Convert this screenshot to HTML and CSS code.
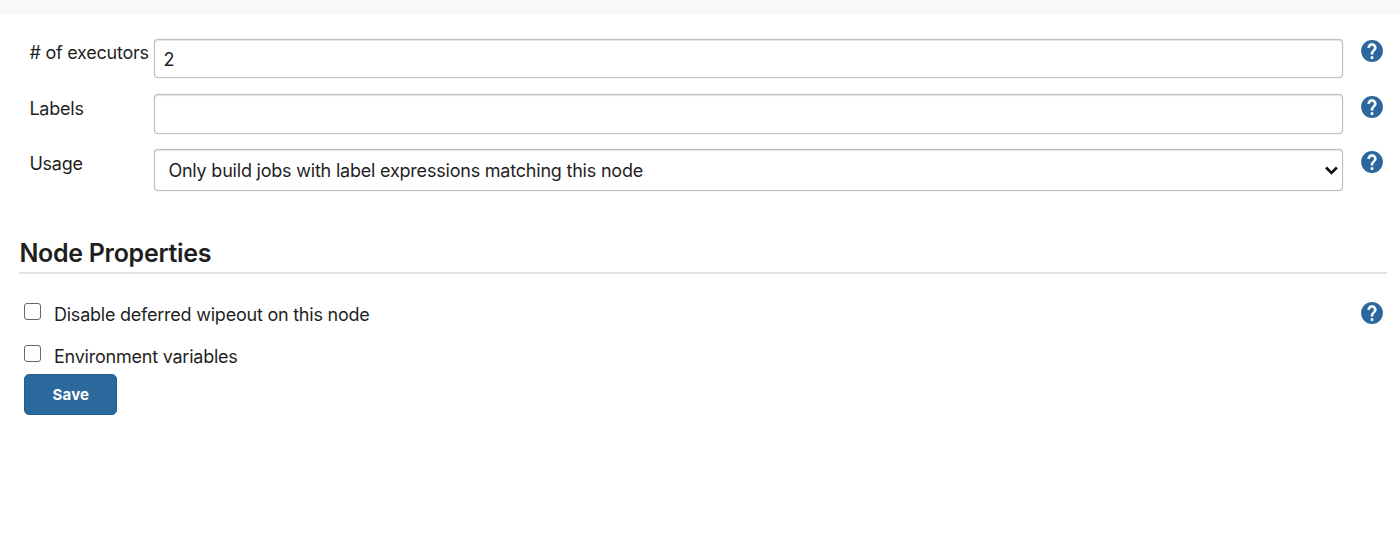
FILE: index.html
```
<!DOCTYPE html>
<html lang="en">
<head>
    <meta charset="UTF-8">
    <meta name="viewport" content="width=device-width, initial-scale=1.0">
    <title>Configure Node</title>
    <link rel="stylesheet" href="styles.css">
</head>
<body>

<svg class="sprite" aria-hidden="true">
    <symbol id="help-icon" viewBox="2 2 20 20">
        <circle cx="12" cy="12" r="9.9"/>
        <path fill="#ffffff" stroke="#ffffff" stroke-width="0.4" d="M13 19h-2v-2h2v2zm2.07-7.75l-.9.92C13.45 12.9 13 13.5 13 15h-2v-.5c0-1.1.45-2.1 1.17-2.83l1.24-1.26c.37-.36.59-.86.59-1.41 0-1.1-.9-2-2-2s-2 .9-2 2H8c0-2.21 1.79-4 4-4s4 1.79 4 4c0 .88-.36 1.68-.93 2.25z"/>
    </symbol>
</svg>

<div class="topbar"></div>

<form class="config">
    <div class="row">
        <label for="executors"># of executors</label>
        <input class="field" type="text" id="executors" value="2">
        <svg class="help"><use href="#help-icon"/></svg>
    </div>

    <div class="row">
        <label for="labels">Labels</label>
        <input class="field" type="text" id="labels">
        <svg class="help"><use href="#help-icon"/></svg>
    </div>

    <div class="row">
        <label for="usage">Usage</label>
        <div class="select">
            <select class="field" id="usage">
                <option>Use this node as much as possible</option>
                <option selected>Only build jobs with label expressions matching this node</option>
            </select>
            <svg class="arrow" viewBox="0 0 12 8"><path d="M1 1.2l5 5 5-5"/></svg>
        </div>
        <svg class="help"><use href="#help-icon"/></svg>
    </div>

    <h2>Node Properties</h2>

    <div class="check">
        <input type="checkbox" id="wipeout">
        <label for="wipeout">Disable deferred wipeout on this node</label>
        <svg class="help"><use href="#help-icon"/></svg>
    </div>

    <div class="check">
        <input type="checkbox" id="env">
        <label for="env">Environment variables</label>
    </div>

    <button type="button">Save</button>
</form>

</body>
</html>
```

FILE: styles.css
```
body {
    margin: 0;
    background-color: #ffffff;
    color: #1f1f1f;
    font-family: Inter, "Liberation Sans", sans-serif;
    font-size: 18px;
    line-height: 22px;
    letter-spacing: -0.23px;
}

.sprite {
    display: none;
}

.topbar {
    height: 15px;
    background-color: #f8f8f8;
}

.config {
    padding: 24px 13px 0 19.4px;
}

.row {
    display: grid;
    grid-template-columns: 125px 1189px 22px;
    height: 39.2px;
    margin: 0 0 16px 10px;
}

.row label {
    padding-top: 3.4px;
    white-space: nowrap;
}

.row .help {
    margin: 1.4px 0 0 17.2px;
}

.field {
    box-sizing: border-box;
    display: block;
    width: 100%;
    height: 39.4px;
    padding: 2px 8px 0;
    border: 1px solid #bebebe;
    border-radius: 4px;
    background-color: #ffffff;
    color: #1f1f1f;
    font: inherit;
    letter-spacing: inherit;
    box-shadow: 0 0 1px rgba(0, 0, 0, 0.3), inset 0 1px 1px rgba(0, 0, 0, 0.1);
}

.select {
    position: relative;
}

select.field {
    height: 42px;
    padding: 2px 13px 0;
    letter-spacing: -0.21px;
    appearance: none;
}

.arrow {
    position: absolute;
    top: 17px;
    right: 5px;
    width: 13px;
    height: 9px;
    fill: none;
    stroke: #111111;
    stroke-width: 2.4;
}

.help {
    width: 22px;
    height: 22px;
    fill: #29679d;
}

h2 {
    margin: 49.4px 0 28px;
    padding-bottom: 4px;
    border-bottom: 2px solid #e2e2e2;
    font-size: 25px;
    font-weight: 600;
    line-height: 30px;
    letter-spacing: -0.3px;
}

.check {
    display: flex;
    height: 22px;
    margin: 0 4.5px 20.4px 5px;
}

.check input {
    appearance: none;
    box-sizing: border-box;
    width: 17px;
    height: 17px;
    margin: 1px 12.6px 0 0;
    border: 1px solid #666666;
    border-radius: 3px;
}

.check label {
    padding-top: 1.6px;
}

.check .help {
    margin-left: auto;
}

button {
    display: block;
    width: 93px;
    height: 41px;
    margin: -12.4px 0 0 5px;
    border: 1px solid #215f94;
    border-radius: 5px;
    background-color: #2b689c;
    color: #ffffff;
    font: 700 15px Inter, sans-serif;
    letter-spacing: 0.15px;
}
```
